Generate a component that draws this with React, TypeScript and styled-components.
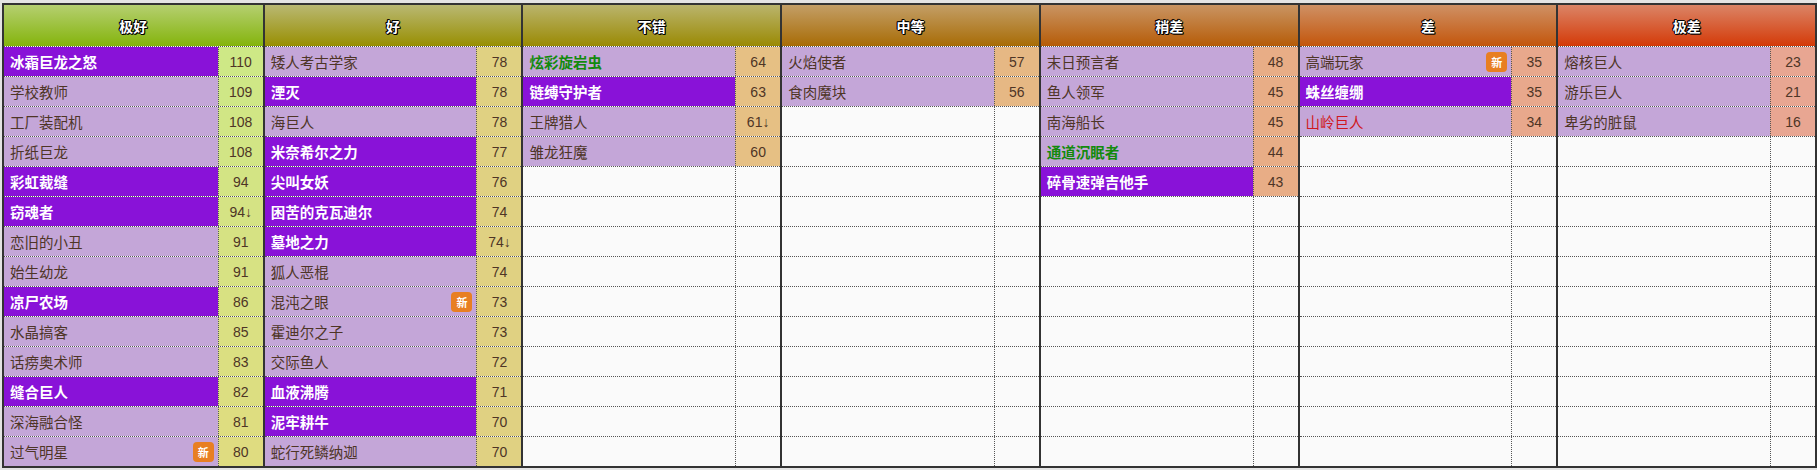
import React from "react";
import styled, { createGlobalStyle } from "styled-components";

type Item = { name: string; score: string; hi?: boolean; green?: boolean; red?: boolean; isNew?: boolean };
type Tier = { title: string; top: string; bottom: string; score: string; items: Item[] };

const tiers: Tier[] = [
  {
    title: "极好", top: "#b5cf70", bottom: "#84b40c", score: "#cee886",
    items: [
      { name: "冰霜巨龙之怒", score: "110", hi: true },
      { name: "学校教师", score: "109" },
      { name: "工厂装配机", score: "108" },
      { name: "折纸巨龙", score: "108" },
      { name: "彩虹裁缝", score: "94", hi: true },
      { name: "窃魂者", score: "94↓", hi: true },
      { name: "恋旧的小丑", score: "91" },
      { name: "始生幼龙", score: "91" },
      { name: "凉尸农场", score: "86", hi: true },
      { name: "水晶搞客", score: "85" },
      { name: "话痨奥术师", score: "83" },
      { name: "缝合巨人", score: "82", hi: true },
      { name: "深海融合怪", score: "81" },
      { name: "过气明星", score: "80", isNew: true },
    ],
  },
  {
    title: "好", top: "#b9b872", bottom: "#988f02", score: "#e0d182",
    items: [
      { name: "矮人考古学家", score: "78" },
      { name: "湮灭", score: "78", hi: true },
      { name: "海巨人", score: "78" },
      { name: "米奈希尔之力", score: "77", hi: true },
      { name: "尖叫女妖", score: "76", hi: true },
      { name: "困苦的克瓦迪尔", score: "74", hi: true },
      { name: "墓地之力", score: "74↓", hi: true },
      { name: "狐人恶棍", score: "74" },
      { name: "混沌之眼", score: "73", isNew: true },
      { name: "霍迪尔之子", score: "73" },
      { name: "交际鱼人", score: "72" },
      { name: "血液沸腾", score: "71", hi: true },
      { name: "泥牢耕牛", score: "70", hi: true },
      { name: "蛇行死鳞纳迦", score: "70" },
    ],
  },
  {
    title: "不错", top: "#bab46c", bottom: "#9a8a04", score: "#e6c084",
    items: [
      { name: "炫彩旋岩虫", score: "64", green: true },
      { name: "链缚守护者", score: "63", hi: true },
      { name: "王牌猎人", score: "61↓" },
      { name: "雏龙狂魔", score: "60" },
    ],
  },
  {
    title: "中等", top: "#c39e66", bottom: "#a86c06", score: "#e6b884",
    items: [
      { name: "火焰使者", score: "57" },
      { name: "食肉魔块", score: "56" },
    ],
  },
  {
    title: "稍差", top: "#c99462", bottom: "#b65c08", score: "#e8ad86",
    items: [
      { name: "末日预言者", score: "48" },
      { name: "鱼人领军", score: "45" },
      { name: "南海船长", score: "45" },
      { name: "通道沉眠者", score: "44", green: true },
      { name: "碎骨速弹吉他手", score: "43", hi: true },
    ],
  },
  {
    title: "差", top: "#cf9064", bottom: "#c3560c", score: "#e8a88c",
    items: [
      { name: "高端玩家", score: "35", isNew: true },
      { name: "蛛丝缠绷", score: "35", hi: true },
      { name: "山岭巨人", score: "34", red: true },
    ],
  },
  {
    title: "极差", top: "#db8466", bottom: "#d43a08", score: "#e8a692",
    items: [
      { name: "熔核巨人", score: "23" },
      { name: "游乐巨人", score: "21" },
      { name: "卑劣的脏鼠", score: "16" },
    ],
  },
];

const ROWS = 14;

const GlobalStyle = createGlobalStyle`
  body {
    margin: 0;
    background: #e4e4e4;
    font-family: "Liberation Sans", "Noto Sans CJK SC", sans-serif;
  }
`;

const Board = styled.div`
  margin: 3px 0 0 2px;
  display: grid;
  grid-template-columns: repeat(7, 1fr);
  border: 2px solid #333;
  background: #fafafa;
`;

const Column = styled.div`
  display: flex;
  flex-direction: column;
  & + & {
    border-left: 2px solid #333;
  }
`;

const Header = styled.div<{ $top: string; $bottom: string }>`
  height: 41px;
  display: flex;
  align-items: center;
  justify-content: center;
  background: linear-gradient(${(p) => p.$top}, ${(p) => p.$bottom});
  color: #fff;
  font-size: 14px;
  font-weight: bold;
  text-shadow: 1px 0 #000, -1px 0 #000, 0 1px #000, 0 -1px #000, 1px 1px #000, -1px -1px #000;
`;

const Row = styled.div`
  height: 29px;
  display: grid;
  grid-template-columns: 1fr 45px;
  border-top: 1px dotted #555;
`;

const Name = styled.div<{ $hi?: boolean; $color?: string; $empty?: boolean }>`
  display: flex;
  align-items: center;
  padding: 0 4px 0 6px;
  font-size: 14.5px;
  background: ${(p) => (p.$empty ? "#fafafa" : p.$hi ? "#8912d8" : "#c4a6d8")};
  color: ${(p) => p.$color ?? (p.$hi ? "#fff" : "#4e3526")};
  font-weight: ${(p) => (p.$hi || p.$color ? "bold" : "normal")};
`;

const Label = styled.span`
  flex: 1;
`;

const NewBadge = styled.span`
  background: #e87f22;
  color: #fff;
  font-size: 11px;
  font-weight: bold;
  border-radius: 4px;
  padding: 2px 5px;
`;

const Score = styled.div<{ $bg: string }>`
  display: flex;
  align-items: center;
  justify-content: center;
  border-left: 1px dotted #555;
  background: ${(p) => p.$bg};
  color: #4e3526;
  font-size: 14px;
`;

function mix(a: string, b: string, t: number) {
  const pa = [1, 3, 5].map((i) => parseInt(a.slice(i, i + 2), 16));
  const pb = [1, 3, 5].map((i) => parseInt(b.slice(i, i + 2), 16));
  return `rgb(${pa.map((v, i) => Math.round(v + (pb[i] - v) * t)).join(",")})`;
}

export default function App() {
  return (
    <>
      <GlobalStyle />
      <Board>
        {tiers.map((tier, ti) => (
          <Column key={tier.title}>
            <Header $top={tier.top} $bottom={tier.bottom}>{tier.title}</Header>
            {Array.from({ length: ROWS }).map((_, i) => {
              const item = tier.items[i];
              if (!item)
                return (
                  <Row key={i}>
                    <Name $empty />
                    <Score $bg="#fafafa" />
                  </Row>
                );
              const bg = ti === 0 ? mix("#cee886", "#dfdc80", i / (ROWS - 1)) : tier.score;
              const color = item.green ? "#138a0c" : item.red ? "#d01820" : undefined;
              return (
                <Row key={i}>
                  <Name $hi={item.hi} $color={color} style={item.red ? { fontWeight: "normal" } : undefined}>
                    <Label>{item.name}</Label>
                    {item.isNew && <NewBadge>新</NewBadge>}
                  </Name>
                  <Score $bg={bg}>{item.score}</Score>
                </Row>
              );
            })}
          </Column>
        ))}
      </Board>
    </>
  );
}
